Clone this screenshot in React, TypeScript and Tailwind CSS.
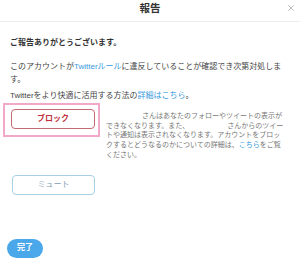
import { X } from "lucide-react";

const font = { fontFamily: '"Liberation Sans", "Noto Sans CJK JP", sans-serif' };

export default function App() {
  return (
    <div className="w-[300px] h-[263px] bg-white text-[#444] overflow-hidden" style={font}>
      <div className="relative h-[22px] flex items-center justify-center border-b border-[#ededed]">
        <span className="text-[10.5px] font-bold text-[#333] leading-none -mt-[4px]">報告</span>
        <X className="absolute right-[4px] top-[3px] w-[10px] h-[10px] text-[#999]" strokeWidth={1.5} />
      </div>

      <div className="px-[10px]">
        <p className="mt-[14px] h-[13px] text-[8px] leading-[13px] font-bold text-[#333]">ご報告ありがとうございます。</p>
        <p className="mt-[11px] text-[8px] leading-[13px]">
          <span className="block whitespace-nowrap">
            このアカウントが<span className="text-[#3a9ae0]">Twitterルール</span>に違反していることが確認でき次第対処しま
          </span>
          <span className="block">す。</span>
        </p>
        <p className="mt-[3px] h-[13px] text-[8px] leading-[13px] whitespace-nowrap">
          Twitterをより快適に活用する方法の<span className="text-[#3a9ae0]">詳細はこちら</span>。
        </p>

        <div className="flex items-start mt-[1px] -ml-[7px]">
          <div className="shrink-0 w-[97px] h-[34px] border-2 border-[#f2a8c8] pt-[4px] pl-[6px]">
            <div className="w-[84px] h-[20px] rounded-[4px] border border-[#c46a72] text-[#c0303c] text-[8px] font-bold flex items-center justify-center">
              ブロック
            </div>
          </div>
          <p className="ml-[6px] mt-[8px] text-[7px] leading-[9.7px] text-[#777] whitespace-nowrap">
            <span className="inline-block w-[36px]" />さんはあなたのフォローやツイートの表示が
            <br />
            できなくなります。また、<span className="inline-block w-[38px]" />さんからのツイー
            <br />
            トや通知は表示されなくなります。アカウントをブロッ
            <br />
            クするとどうなるのかについての詳細は、<span className="text-[#3a9ae0]">こちら</span>をご覧
            <br />
            ください。
          </p>
        </div>

        <div className="mt-[15px] ml-[2px] w-[83px] h-[20px] rounded-[4px] border border-[#a8cfe6] text-[#7d9db3] text-[8px] flex items-center justify-center">
          ミュート
        </div>
      </div>

      <div className="mt-[44px] ml-[7px] w-[36px] h-[19px] rounded-full bg-[#4aa8ea] text-white text-[8px] font-bold flex items-center justify-center">
        完了
      </div>
    </div>
  );
}
